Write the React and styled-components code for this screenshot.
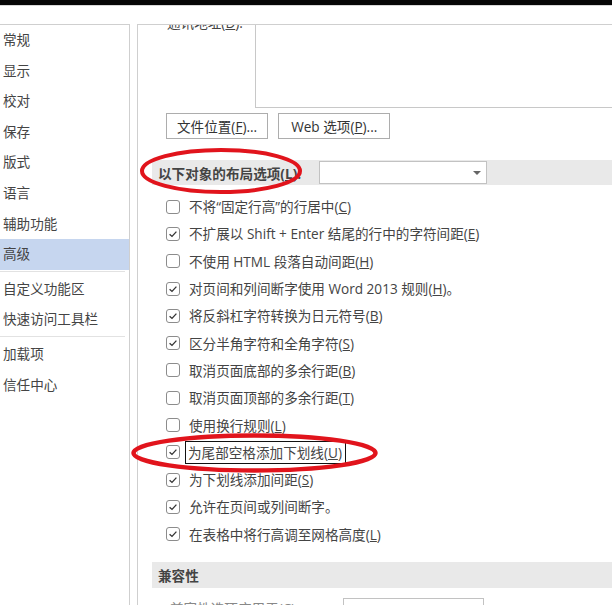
import React from 'react'
import styled, { createGlobalStyle } from 'styled-components'

const GlobalStyle = createGlobalStyle`
  html, body {
    margin: 0;
    padding: 0;
    background: #fff;
  }
  body {
    font-family: "Open Sans", "Noto Sans CJK SC", sans-serif;
    color: #444;
  }
`

const Frame = styled.div`
  position: relative;
  width: 612px;
  height: 605px;
  overflow: hidden;
  background: #fff;
  font-size: 13.6px;
`

const TopBar = styled.div`
  height: 5px;
  background: #060606;
  border-bottom: 1px solid #d8d8d8;
`

const Main = styled.div`
  display: flex;
  gap: 7px;
  padding-top: 18px;
  height: 600px;
  box-sizing: border-box;
`

const Nav = styled.nav`
  width: 130px;
  flex-shrink: 0;
  box-sizing: border-box;
  border-top: 1px solid #cfcfcf;
  border-right: 1px solid #cfcfcf;
`

const NavItem = styled.div`
  height: 30.6px;
  line-height: 30.6px;
  padding-left: 3px;
  color: #444;
  background: ${(props) => (props.active ? '#c6d6ef' : 'transparent')};
  white-space: nowrap;
`

const NavDivider = styled.div`
  height: 1px;
  margin: 1px 4px 2px 0;
  background: #e2e2e2;
`

const Panel = styled.section`
  flex: 1;
  border-top: 1px solid #cfcfcf;
  border-left: 1px solid #cfcfcf;
  overflow: hidden;
`

const AddressRow = styled.div`
  display: grid;
  grid-template-columns: 117px 1fr;
  height: 95px;
  margin-top: -12px;
`

const FieldLabel = styled.div`
  padding-left: 29px;
  line-height: 20px;
  white-space: nowrap;
`

const AddressBox = styled.div`
  border: 1px solid #c8c8c8;
  border-right: none;
  margin-right: -4px;
  background: #fff;
`

const ButtonRow = styled.div`
  display: flex;
  gap: 10px;
  margin-top: 5px;
  padding-left: 28px;
`

const Button = styled.button`
  height: 26px;
  padding: 0 ${(props) => props.pad || 10}px;
  border: 1px solid #adadad;
  background: #fff;
  font: inherit;
  color: #333;
  white-space: nowrap;
  cursor: default;
`

const SectionHeader = styled.div`
  display: grid;
  grid-template-columns: 161px 168px;
  align-items: center;
  height: ${(props) => props.height || 25}px;
  margin: ${(props) => props.top}px 0 0 14px;
  padding-left: 6px;
  background: #e9e9e9;
  font-weight: 700;
  color: #444;
  white-space: nowrap;
`

const Select = styled.div`
  position: relative;
  height: ${(props) => props.height || 23}px;
  box-sizing: border-box;
  border: 1px solid #c2c2c2;
  background: #fff;
  &::after {
    content: '';
    position: absolute;
    right: 5px;
    top: 50%;
    margin-top: -2px;
    border-left: 4px solid transparent;
    border-right: 4px solid transparent;
    border-top: 4px solid #666;
  }
`

const OptionList = styled.div`
  margin-top: 8px;
`

const OptionRow = styled.label`
  display: flex;
  align-items: center;
  height: 27.3px;
  padding-left: 28px;
  gap: 9px;
  white-space: nowrap;
`

const Box = styled.span`
  width: 14px;
  height: 14px;
  flex-shrink: 0;
  box-sizing: border-box;
  border: 1px solid #8c8c8c;
  border-radius: 3px;
  display: flex;
  align-items: center;
  justify-content: center;
`

const OptionText = styled.span`
  color: #444;
  line-height: 19px;
  ${(props) =>
    props.focused &&
    `
    margin-left: -4px;
    padding: 2px 4px 2px 3px;
    outline: 1.5px solid #111;
    outline-offset: -1px;
  `}
`

const CompatRow = styled.div`
  display: grid;
  grid-template-columns: 173px 141px;
  align-items: start;
  margin-top: 10px;
  padding-left: 32px;
  color: #888;
  white-space: nowrap;
`

const Overlay = styled.svg`
  position: absolute;
  left: 0;
  top: 0;
  pointer-events: none;
`

const Check = () => (
  <svg width="10" height="10" viewBox="0 0 10 10">
    <polyline points="1.6,5.2 4,7.4 8.4,2.6" fill="none" stroke="#333" strokeWidth="1.3" />
  </svg>
)

const navTop = ['常规', '显示', '校对', '保存', '版式', '语言', '辅助功能']

const options = [
  [false, <>不将“固定行高”的行居中(<u>C</u>)</>],
  [true, <>不扩展以 Shift + Enter 结尾的行中的字符间距(<u>E</u>)</>],
  [false, <>不使用 HTML 段落自动间距(<u>H</u>)</>],
  [true, <>对页间和列间断字使用 Word 2013 规则(<u>H</u>)。</>],
  [true, <>将反斜杠字符转换为日元符号(<u>B</u>)</>],
  [true, <>区分半角字符和全角字符(<u>S</u>)</>],
  [false, <>取消页面底部的多余行距(<u>B</u>)</>],
  [false, <>取消页面顶部的多余行距(<u>T</u>)</>],
  [false, <>使用换行规则(<u>L</u>)</>],
  [true, <>为尾部空格添加下划线(<u>U</u>)</>, true],
  [true, <>为下划线添加间距(<u>S</u>)</>],
  [true, <>允许在页间或列间断字。</>],
  [true, <>在表格中将行高调至网格高度(<u>L</u>)</>],
]

export default function App() {
  return (
    <Frame>
      <GlobalStyle />
      <TopBar />
      <Main>
        <Nav>
          {navTop.map((item) => (
            <NavItem key={item}>{item}</NavItem>
          ))}
          <NavItem active>高级</NavItem>
          <NavDivider />
          <NavItem>自定义功能区</NavItem>
          <NavItem>快速访问工具栏</NavItem>
          <NavDivider />
          <NavItem>加载项</NavItem>
          <NavItem>信任中心</NavItem>
        </Nav>
        <Panel>
          <AddressRow>
            <FieldLabel>
              通讯地址(<u>D</u>):
            </FieldLabel>
            <AddressBox />
          </AddressRow>
          <ButtonRow>
            <Button>
              文件位置(<u>F</u>)...
            </Button>
            <Button pad={12}>
              Web 选项(<u>P</u>)...
            </Button>
          </ButtonRow>
          <SectionHeader top={21}>
            <span>
              以下对象的布局选项(<u>L</u>):
            </span>
            <Select />
          </SectionHeader>
          <OptionList>
            {options.map(([checked, text, focused], i) => (
              <OptionRow key={i}>
                <Box>{checked && <Check />}</Box>
                <OptionText focused={focused}>{text}</OptionText>
              </OptionRow>
            ))}
          </OptionList>
          <SectionHeader top={14} height={26}>
            <span>兼容性</span>
          </SectionHeader>
          <CompatRow>
            <span>
              兼容性选项应用于(<u>C</u>):
            </span>
            <Select height={24} />
          </CompatRow>
        </Panel>
      </Main>
      <Overlay width="612" height="605" viewBox="0 0 612 605">
        <ellipse cx="221" cy="171" rx="79" ry="21" fill="none" stroke="#e1141c" strokeWidth="4" />
        <ellipse cx="254.5" cy="453" rx="121" ry="17.5" fill="none" stroke="#e1141c" strokeWidth="4.5" />
      </Overlay>
    </Frame>
  )
}
